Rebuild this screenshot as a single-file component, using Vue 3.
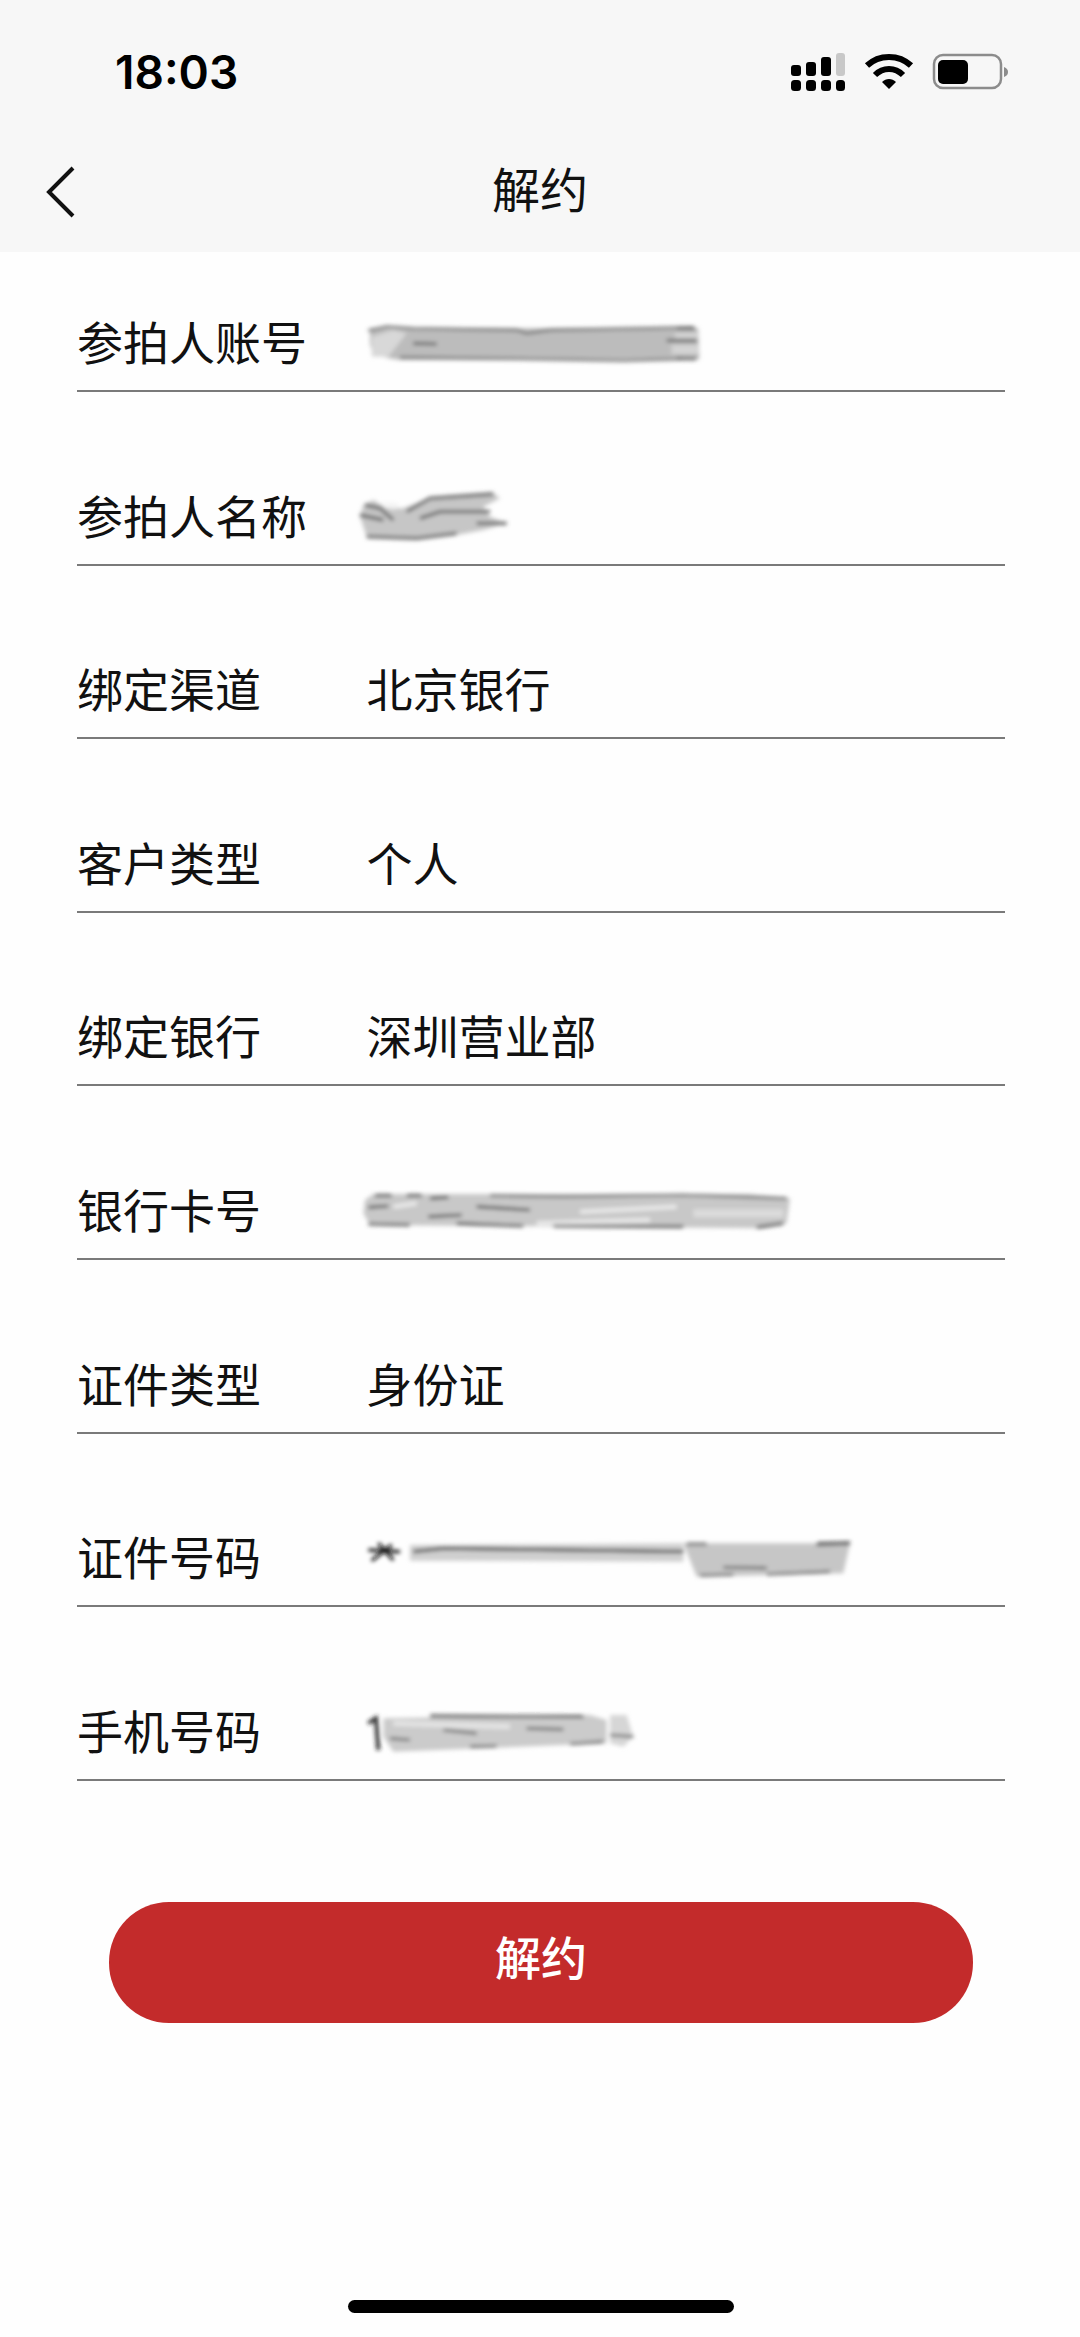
<script setup>
const dark = (d, stroke = '#777', sw = 5) => ({ d, stroke, sw, fill: 'none' })
const area = (d, fill) => ({ d, fill, stroke: 'none', sw: 0 })

const blobs = {
  account: {
    w: 370,
    shapes: [
      area('M60 55 L1045 55 L1048 148 L150 150 Q60 140 60 100 Z', '#bcbcbc'),
      area('M65 80 L130 60 L170 70 L115 140 L65 140 Z', '#d8d8d8'),
      area('M975 68 L1045 68 L1045 85 L975 85 Z M965 105 L1045 105 L1045 132 L965 132 Z', '#d4d4d4'),
      dark('M55 62 L110 50 L190 55 L500 60 L530 70 L600 60 L1030 52', '#666', 7),
      dark('M150 142 L600 148 L820 152 L1040 146', '#666', 7),
      dark('M190 100 L260 102 M980 55 L1035 55 M950 92 L1040 92 M980 145 L1035 147', '#555', 8),
    ],
  },
  name: {
    w: 170,
    shapes: [
      area('M40 75 L70 60 L110 85 L160 85 L250 50 L430 40 L450 55 L400 80 L420 110 L470 130 L400 150 L320 165 L200 175 L50 170 L30 110 Z', '#c6c6c6'),
      area('M95 65 L150 70 L130 90 Z', '#f4f4f4'),
      dark('M45 75 L90 85 L130 120 M170 95 L240 55 L430 42 M210 115 L270 95 L420 95 M30 105 L100 120 M380 130 L470 130 M50 170 L200 175 L320 160', '#666', 10),
    ],
  },
  card: {
    w: 460,
    shapes: [
      area('M45 60 L70 42 L1200 42 L1320 55 L1310 130 L1240 145 L60 135 L40 100 Z', '#c8c8c8'),
      dark('M690 95 L980 80 M560 130 L900 120 M130 80 L200 70', '#ececec', 12),
      dark('M1030 100 L1300 100', '#dcdcdc', 24),
      dark('M420 47 L640 50 L1000 45 L1310 55', '#777', 8),
      dark('M75 47 L125 47 M170 47 L215 47 M240 55 L295 52 M55 82 L115 78 M235 110 L335 105 M380 80 L540 90 M55 132 L180 135 M320 130 L520 138 M610 138 L1000 140 M1220 142 L1300 130', '#444', 8),
    ],
  },
  id: {
    w: 520,
    shapes: [
      area('M180 45 L1000 40 L1000 95 L180 92 Z', '#cfcfcf'),
      area('M1000 40 L1500 40 L1480 130 L1040 140 Z', '#c6c6c6'),
      dark('M190 65 L280 55 L1000 65', '#222', 8),
      dark('M55 60 L150 65 M85 40 L130 90 M65 92 L125 45', '#111', 9),
      dark('M1400 42 L1500 40', '#000', 9),
      dark('M1010 42 L1070 42 M1120 112 L1250 114 M1050 136 L1150 134 M1250 133 L1440 125', '#555', 7),
    ],
  },
  phone: {
    w: 300,
    shapes: [
      area('M100 55 L720 45 L770 60 L770 130 L400 145 L130 155 L100 110 Z', '#cbcbcb'),
      area('M780 45 L830 45 L850 110 L820 140 L780 130 Z', '#d6d6d6'),
      dark('M130 70 L480 80', '#e6e6e6', 14),
      dark('M55 70 L78 55 L85 150', '#222', 11),
      dark('M240 48 L700 50', '#111', 7),
      dark('M530 85 L640 88 M120 115 L180 120 M360 140 L440 138 M660 132 L760 125 M780 105 L850 110 M280 90 L380 100', '#666', 8),
    ],
  },
}

const rows = [
  { label: '参拍人账号', blob: 'account' },
  { label: '参拍人名称', blob: 'name' },
  { label: '绑定渠道', value: '北京银行' },
  { label: '客户类型', value: '个人' },
  { label: '绑定银行', value: '深圳营业部' },
  { label: '银行卡号', blob: 'card' },
  { label: '证件类型', value: '身份证' },
  { label: '证件号码', blob: 'id' },
  { label: '手机号码', blob: 'phone' },
]
</script>

<template>
  <div class="page">
    <header class="top">
      <div class="status">
        <span class="time">18:03</span>
        <svg class="status-icons" width="220" height="40" viewBox="0 0 220 40">
          <g fill="#000">
            <rect x="0" y="14" width="10" height="11" rx="3" />
            <rect x="15" y="11" width="10" height="14" rx="3" />
            <rect x="30" y="6" width="10" height="19" rx="3" />
            <rect x="45" y="2" width="9" height="23" rx="3" fill="#c8c8c8" />
            <rect x="0" y="29" width="10" height="11" rx="3.5" />
            <rect x="15" y="29" width="10" height="11" rx="3.5" />
            <rect x="30" y="29" width="10" height="11" rx="3.5" />
            <rect x="45" y="29" width="9" height="11" rx="3.5" />
          </g>
          <g fill="none" stroke="#000" stroke-width="6">
            <path d="M76 14.5 C88 3 108 3 120 14.5" />
            <path d="M84 24 C92 16 104 16 112 24" />
          </g>
          <path d="M91 31 C95 27 101 27 105 31 L98 38 Z" fill="#000" />
          <rect x="143" y="4" width="67" height="33" rx="9" fill="none" stroke="#8c8c8c" stroke-width="2.5" />
          <rect x="147" y="9" width="30" height="24" rx="5" fill="#000" />
          <path d="M213 16 C216 17 217 19 217 21 C217 23 216 25 213 26 Z" fill="#8c8c8c" />
        </svg>
      </div>
      <div class="nav">
        <svg class="back" width="30" height="52" viewBox="0 0 30 52">
          <path d="M27 2 L3 26 L27 50" fill="none" stroke="#111" stroke-width="4" />
        </svg>
        <span class="title">解约</span>
      </div>
    </header>

    <svg width="0" height="0" class="defs">
      <defs>
        <filter id="soft" x="-10%" y="-40%" width="120%" height="180%">
          <feGaussianBlur stdDeviation="7" />
        </filter>
      </defs>
    </svg>

    <main class="list">
      <div v-for="row in rows" :key="row.label" class="row">
        <span class="label">{{ row.label }}</span>
        <span v-if="row.value" class="value">{{ row.value }}</span>
        <svg
          v-else
          class="blob"
          :class="`blob-${row.blob}`"
          :width="blobs[row.blob].w"
          height="70"
          :viewBox="`0 0 ${blobs[row.blob].w * 3} 210`"
        >
          <g filter="url(#soft)">
            <path
              v-for="(shape, i) in blobs[row.blob].shapes"
              :key="i"
              :d="shape.d"
              :fill="shape.fill"
              :stroke="shape.stroke"
              :stroke-width="shape.sw"
            />
          </g>
        </svg>
      </div>
    </main>

    <div class="action">
      <button class="submit" type="button">解约</button>
    </div>

    <div class="home"></div>
  </div>
</template>

<style scoped>
.page {
  width: 1080px;
  height: 2337px;
  background: #fefefe;
  display: flex;
  flex-direction: column;
  font-family: "Noto Sans CJK SC", "Noto Sans", sans-serif;
  color: #111;
  overflow: hidden;
}
.top {
  height: 252px;
  background: #f7f7f7;
  flex: none;
}
.status {
  height: 130px;
  padding: 0 69px 0 115px;
  display: flex;
  align-items: center;
  justify-content: space-between;
  box-sizing: border-box;
}
.time {
  font-family: Inter, "Liberation Sans", sans-serif;
  font-size: 46px;
  font-weight: 600;
  color: #000;
  line-height: 1;
  padding-top: 14px;
}
.status-icons {
  margin-top: 12px;
}
.nav {
  position: relative;
  height: 122px;
  display: flex;
  align-items: center;
  justify-content: center;
}
.back {
  position: absolute;
  left: 46px;
  top: 36px;
}
.title {
  font-size: 48px;
  line-height: 64px;
  margin-bottom: 8px;
}
.list {
  display: flex;
  flex-direction: column;
  gap: 33.6px;
  padding: 0 75px 0 77px;
  flex: none;
}
.row {
  height: 140px;
  box-sizing: border-box;
  display: flex;
  align-items: flex-end;
  padding-bottom: 18px;
  border-bottom: 2px solid #7a7a7a;
}
.label {
  width: 289.5px;
  flex: none;
  font-size: 46px;
  line-height: 64px;
}
.value {
  font-size: 46px;
  line-height: 64px;
}
.blob {
  display: block;
  flex: none;
  margin-left: -16.5px;
  overflow: visible;
}
.blob-account {
  margin-bottom: -8px;
}
.blob-name {
  margin-bottom: -4.4px;
}
.blob-card {
  margin-bottom: -10px;
}
.blob-id {
  margin-bottom: -12.8px;
}
.blob-phone {
  margin-bottom: -9.2px;
}
.defs {
  position: absolute;
}
.action {
  padding: 121px 107px 0 109px;
  flex: none;
}
.submit {
  display: block;
  width: 100%;
  height: 121px;
  border: none;
  border-radius: 60px;
  background: #c32b2b;
  color: #fff;
  font-family: inherit;
  font-size: 46px;
  font-weight: 500;
  padding: 0 0 14px;
}
.home {
  width: 386px;
  height: 13px;
  border-radius: 7px;
  background: #000;
  margin: 277px 0 0 348px;
  flex: none;
}
</style>

<style>
body {
  margin: 0;
  background: #fefefe;
}
</style>
